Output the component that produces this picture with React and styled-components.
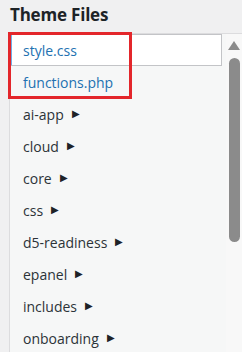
import React from "react";
import styled, { createGlobalStyle } from "styled-components";

const GlobalStyle = createGlobalStyle`
  html, body {
    margin: 0;
    padding: 0;
    background: #f0f0f1;
    font-family: "Open Sans", "Noto Sans", sans-serif;
  }
`;

const files = [
  { name: "style.css", type: "file", active: true },
  { name: "functions.php", type: "file" },
  { name: "ai-app", type: "dir" },
  { name: "cloud", type: "dir" },
  { name: "core", type: "dir" },
  { name: "css", type: "dir" },
  { name: "d5-readiness", type: "dir" },
  { name: "epanel", type: "dir" },
  { name: "includes", type: "dir" },
  { name: "onboarding", type: "dir" },
];

function App() {
  return (
    <Page>
      <GlobalStyle />
      <Title>Theme Files</Title>
      <Panel>
        <List>
          {files.map((f) => (
            <Row key={f.name} active={f.active}>
              <Name isfile={f.type === "file"}>{f.name}</Name>
              {f.type === "dir" && <Arrow>&#9654;</Arrow>}
            </Row>
          ))}
        </List>
        <ScrollBar>
          <UpArrow />
          <Thumb />
        </ScrollBar>
        <Highlight />
      </Panel>
    </Page>
  );
}

export default App;

const Page = styled.div`
  width: 242px;
  height: 352px;
  overflow: hidden;
  background: #f0f0f1;
`;

const Title = styled.h2`
  margin: 0;
  height: 33px;
  padding: 3px 0 0 10px;
  box-sizing: border-box;
  font-size: 17px;
  font-weight: 700;
  color: #1d2327;
  letter-spacing: -0.2px;
`;

const Panel = styled.div`
  position: relative;
  margin-left: 9px;
  height: 319px;
  display: flex;
  border-top: 1px solid #dcdcde;
  border-left: 1px solid #dcdcde;
  background: #f6f7f7;
`;

const List = styled.ul`
  list-style: none;
  margin: 0;
  padding: 0;
  flex: 1;
`;

const Row = styled.li`
  height: 32px;
  box-sizing: border-box;
  display: flex;
  align-items: center;
  padding-left: ${(p) => (p.active ? "11px" : "13px")};
  background: ${(p) => (p.active ? "#fff" : "transparent")};
  border: ${(p) => (p.active ? "1px solid #c3c4c7" : "none")};
  border-left: ${(p) => (p.active ? "2px solid #72aee6" : "none")};
  margin-right: 4px;
`;

const Name = styled.span`
  font-size: 14px;
  color: ${(p) => (p.isfile ? "#2271b1" : "#2c3338")};
`;

const Arrow = styled.span`
  font-size: 10px;
  margin-left: 8px;
  color: #1d2327;
  position: relative;
  top: -1px;
`;

const ScrollBar = styled.div`
  width: 16px;
  background: #f8f8f8;
  display: flex;
  flex-direction: column;
  align-items: center;
  padding-top: 7px;
`;

const UpArrow = styled.div`
  width: 0;
  height: 0;
  border-left: 6px solid transparent;
  border-right: 6px solid transparent;
  border-bottom: 9px solid #8b8b8b;
`;

const Thumb = styled.div`
  margin-top: 8px;
  width: 11px;
  height: 184px;
  border-radius: 6px;
  background: #8b8b8b;
`;

const Highlight = styled.div`
  position: absolute;
  left: -2px;
  top: -2px;
  width: 124px;
  height: 67px;
  box-sizing: border-box;
  border: 3px solid #e3262b;
  pointer-events: none;
`;
